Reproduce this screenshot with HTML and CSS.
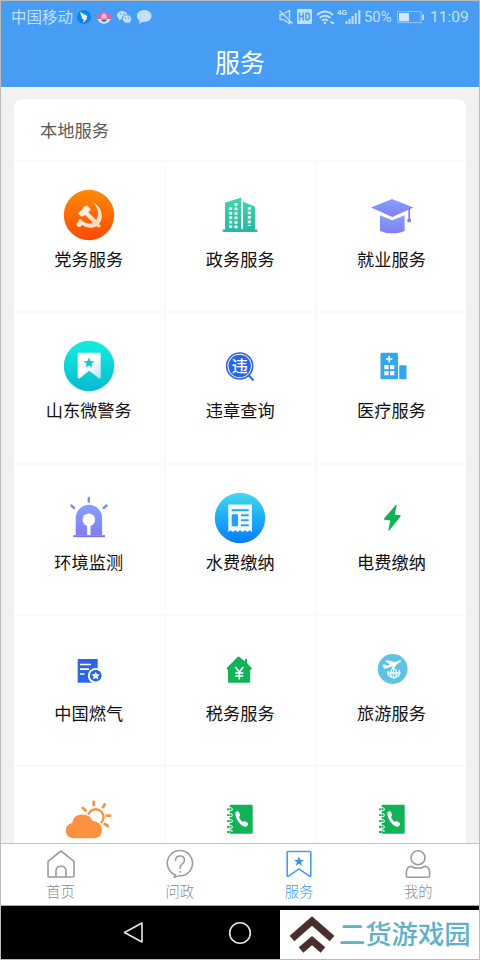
FILE: index.html
```html
<!DOCTYPE html>
<html lang="zh-CN">
<head>
<meta charset="utf-8">
<title>服务</title>
<link rel="stylesheet" href="styles.css">
</head>
<body>
<div class="phone">
  <header class="top">
    <div class="status">
      <div class="status-left">
        <span class="carrier">中国移动</span>
        <svg class="s-icon" viewBox="0 0 16 16"><circle cx="8" cy="8" r="7" fill="#0a84ee"/><path d="M4 3l7.500 4-1.200 2.200 1 .3-4.100 4.500.5-3.700-1.400-.3z" fill="#e8f6ff"/></svg>
        <svg class="s-icon" viewBox="0 0 16 16"><path d="M1.500 10Q0 6 1 4.500q2.500.5 3.500 3Q4.500 3.500 8 1.500q3.500 2 3.500 6 1-2.500 3.500-3 1 1.500-.5 5.500z" fill="#e0629f"/><path d="M5 9.500q0-4 3-5.500 3 1.500 3 5.500z" fill="#f4b5d6"/><path d="M1.500 10h13q-1 4-6.500 5-5.500-1-6.500-5z" fill="#d5dfe9"/><path d="M5 10.500h6l-1.500 2h-3z" fill="#605876"/></svg>
        <svg class="s-icon" viewBox="0 0 16 16"><path d="M6.300 2C3.300 2 1 3.900 1 6.300c0 1.400.8 2.600 2 3.400L2.600 11.500l2-1.100 1.200.2c-.5-3 2-5.200 5.500-5.200C10.700 3.400 8.700 2 6.300 2zM11.100 6.300c-2.500 0-4.400 1.600-4.400 3.700s1.900 3.700 4.400 3.700l1.400-.2 1.600.9-.4-1.500c1-.7 1.600-1.700 1.600-2.900 0-2.100-1.800-3.700-4.200-3.700z" fill="#c2e0fc"/><path d="M4.500 5h.1M8 5h.1M9.600 9h.1M12.600 9h.1" stroke="#469df3" stroke-width="1.300" stroke-linecap="round"/></svg>
        <svg class="s-icon" viewBox="0 0 16 16"><path d="M8.300 1C4.200 1 1 3.500 1 7c0 2.200 1 3.800 2.800 4.900L3 15l4-2.200c5 .4 8.600-2.200 8.600-5.800C15.600 3.500 12.400 1 8.300 1z" fill="#c2e0fc"/></svg>
      </div>
      <div class="status-right">
        <svg class="mute" viewBox="0 0 16 16" fill="none" stroke="#c2e0fc" stroke-width="1.400"><path d="M5 5.500H2v5h3l6.500 4V12M6.500 4.500l5-3v8M1.500 1.500l13 13"/></svg>
        <svg class="hd" viewBox="0 0 15 15"><rect width="15" height="15" rx="1" fill="#c2e0fc"/><path d="M2.500 3.500v8M6.300 3.500v8M2.500 7.500h3.800M9 4.200v6.600h1.500q2 0 2-3.300t-2-3.300z" fill="none" stroke="#469df3" stroke-width="1.500"/></svg>
        <svg class="wifi" viewBox="0 0 19 16" fill="none" stroke="#c2e0fc" stroke-width="1.900"><path d="M1 6q8-7 16 0M3.500 9q5.500-4.500 11 0M6 11.700q3-2.400 6 0"/><circle cx="9" cy="14" r="1.200" fill="#c2e0fc" stroke="none"/><path d="M14.500 12.500l1.500 1.500M17 13v2"/></svg>
        <svg class="signal" viewBox="0 0 25 17"><text x="0" y="7" class="net">4G</text><path d="M9.500 13v3M12.500 11v5M15.500 8v8M18.700 5v11M22.300 2v14" stroke="#c2e0fc" stroke-width="2"/></svg>
        <span class="percent">50%</span>
        <svg class="battery" viewBox="0 0 28 14"><rect x=".6" y="1.600" width="23.500" height="11" fill="none" stroke="#8fc5f8" stroke-width="1"/><rect x="2" y="3" width="10" height="8.300" fill="#d3e8fd"/><path d="M26 4.500v5.500" stroke="#b6dafb" stroke-width="2"/></svg>
        <span class="time">11:09</span>
      </div>
    </div>
    <h1 class="title">服务</h1>
  </header>

  <main class="content">
    <section class="card">
      <h2 class="card-title">本地服务</h2>
      <div class="grid">
        <div class="cell">
          <svg class="icon" viewBox="0 0 60 60"><defs><linearGradient id="party" x2="0" y2="1"><stop stop-color="#fd8b07"/><stop offset="1" stop-color="#fb4a05"/></linearGradient><linearGradient id="fade" x2="1" y2="1"><stop stop-color="#fff"/><stop offset="1" stop-color="#ffd5b5"/></linearGradient></defs><circle cx="30" cy="30" r="25.200" fill="url(#party)"/><path d="M34 17.500C40 20 44 27 42.500 34q-.8 3-2.500 5l2 2-2.500 1.800-2-1.600c-5 2.500-10.500 1.800-14.500-1.500-.5 2.200-3 3.200-4.600 1.600-1.500-1.700-.7-4 1.300-4.500-.4-1.500.4-2.600 1.700-2.800 4 4.500 9 5.500 13 3.500C41 33 40.500 24 34 17.500z" fill="url(#fade)"/><path d="M18.700 28.500l5.300-4.800.2-1.700 4-1.500 3.800 4-2.700 2.700 10.500 10.500-3 3-10.600-10.600-3.500 1.700z" fill="url(#fade)"/></svg>
          <span class="label">党务服务</span>
        </div>
        <div class="cell">
          <svg class="icon" viewBox="0 0 60 60"><defs><linearGradient id="gov" x2="0" y2="1"><stop stop-color="#3ed8b1"/><stop offset="1" stop-color="#27b7a1"/></linearGradient></defs><path d="M15 17.800l16.300-5.300V44h1.700V16.500l12 5.200V44.500h2.300V47H12.700v-2.500H15z" fill="url(#gov)"/><path d="M20.700 22.300v21M26 18v25.500M39.300 22v19" stroke="#fff" stroke-width="3" stroke-dasharray="2.800 1.700"/><path d="M32.200 17v27" stroke="#fff" stroke-width="1.700"/></svg>
          <span class="label">政务服务</span>
        </div>
        <div class="cell">
          <svg class="icon" viewBox="0 0 60 60"><defs><linearGradient id="violet" x2="0" y2="1"><stop stop-color="#82a3f8"/><stop offset="1" stop-color="#837cf5"/></linearGradient></defs><path d="M18 30.300l12.300 5 12.300-5V46q-12 5-24.600 0z" fill="url(#violet)"/><path d="M9 22.500L30 14l21.500 8.500L30.300 32z" fill="url(#violet)"/><path d="M47.200 23v13" stroke="#827ff5" stroke-width="1.800"/><circle cx="47.200" cy="35.500" r="2" fill="#827ff5"/></svg>
          <span class="label">就业服务</span>
        </div>

        <div class="cell">
          <svg class="icon" viewBox="0 0 60 60"><defs><linearGradient id="teal" x2="0" y2="1"><stop stop-color="#12efe0"/><stop offset="1" stop-color="#08b9cf"/></linearGradient><linearGradient id="mark" x1=".3" x2="1" y2="1"><stop offset=".4" stop-color="#fff"/><stop offset="1" stop-color="#abeaf0"/></linearGradient></defs><circle cx="30" cy="30" r="25.200" fill="url(#teal)"/><path d="M19.500 16.700h21.200q1 0 1 1v24q-.6 1.300-1.800.5L30.200 34.700l-9.500 7.500q-1.400.8-2-.5v-24q0-1 .8-1z" fill="url(#mark)"/><path d="M30 21.200l1.500 3.700 3.900.3-3 2.500 1 3.800-3.400-2.100-3.400 2.100 1-3.800-3-2.500 3.900-.3z" fill="#14c6cf"/></svg>
          <span class="label">山东微警务</span>
        </div>
        <div class="cell">
          <svg class="icon" viewBox="0 0 60 60"><circle cx="29.700" cy="30" r="13" fill="#fff" stroke="#3569db" stroke-width="1.700"/><circle cx="29.700" cy="30" r="11.200" fill="#2865e7"/><path d="M38.500 39l5 5.500" stroke="#3569db" stroke-width="2"/><text x="29.700" y="35.800" class="wei">违</text></svg>
          <span class="label">违章查询</span>
        </div>
        <div class="cell">
          <svg class="icon" viewBox="0 0 60 60" fill="#32a7ed"><rect x="18.500" y="16.700" width="17.500" height="26.500" rx="1.500"/><rect x="37.200" y="29.200" width="7.300" height="14" rx="1"/><path d="M27.200 19.800v6.400M24 23h6.400" stroke="#fff" stroke-width="1.700"/><path d="M22.300 29h4.300v4.300h-4.300zM28 29h4.300v4.300H28zM22.300 35h4.300v4.300h-4.300zM28 35h4.300v4.300H28z" fill="#fff"/></svg>
          <span class="label">医疗服务</span>
        </div>

        <div class="cell">
          <svg class="icon" viewBox="0 0 60 60"><path d="M16.700 47V30a13.200 13.200 0 0 1 26.400 0v17z" fill="url(#violet)"/><path d="M14.300 48.200H46" stroke="#7777dc" stroke-width="2"/><path d="M29.800 10v3.500M12.300 17.500l2.800 2.500M47.500 17.500L44.700 20" stroke="#7e8cf2" stroke-width="2.400" stroke-linecap="round"/><circle cx="29.800" cy="31.700" r="6.300" fill="#fff"/><path d="M29.800 34v13" stroke="#fff" stroke-width="3.400"/></svg>
          <span class="label">环境监测</span>
        </div>
        <div class="cell">
          <svg class="icon" viewBox="0 0 60 60"><defs><linearGradient id="water" x2="0" y2="1"><stop stop-color="#45d7ed"/><stop offset=".5" stop-color="#1eabf8"/><stop offset="1" stop-color="#087cf9"/></linearGradient></defs><circle cx="30" cy="30" r="25.200" fill="url(#water)"/><path d="M18.300 16.400H42V44L39.700 42.300 37.300 44 34.900 42.300 32.500 44 30.100 42.300 27.700 44 25.300 42.300 22.900 44 20.500 42.300 18.300 44z" fill="#f4fbff"/><path d="M21.700 22.300h17M31 27.300h7.700M31 32.300h7.700M31 37.300h7.700" stroke="#23a7f8" stroke-width="1.900"/><path d="M21.700 26.300h6.300v12h-6.300z" fill="#23a0f8"/></svg>
          <span class="label">水费缴纳</span>
        </div>
        <div class="cell">
          <svg class="icon" viewBox="0 0 60 60"><path d="M34 16.700L22 30.500l.3 1.200 6 .8-2 9.900 1 .2L38.700 28.300l-.4-1-5.500-.8 2-9.500z" fill="#11b258"/></svg>
          <span class="label">电费缴纳</span>
        </div>

        <div class="cell">
          <svg class="icon" viewBox="0 0 60 60"><path d="M18.700 20h20v23.700h-20z" fill="#2a65ea"/><path d="M21 25.500h11M21 30.200h9M21 35h4.500" stroke="#fff" stroke-width="1.700"/><circle cx="36.700" cy="36.700" r="7.800" fill="#fff"/><circle cx="36.700" cy="36.700" r="5.900" fill="#2a65ea"/><path d="M36.700 32.700l1.300 2.500 2.800.4-2 1.900.5 2.800-2.600-1.300-2.600 1.300.5-2.800-2-1.900 2.800-.4z" fill="#fff"/></svg>
          <span class="label">中国燃气</span>
        </div>
        <div class="cell">
          <svg class="icon" viewBox="0 0 60 60"><path d="M29 17.700l6 4.600V20h2v4l4.900 5.200q0 1.800-1.700 1.600v12q0 1-1 1H19q-1 0-1-1v-12q-2 0-1.200-1.800L27.500 18q.8-.6 1.500-.3z" fill="#11b258"/><path d="M25.300 28l4 5 4-5M29.300 33v7.500M25.300 34h8M25.300 37h8" fill="none" stroke="#fff" stroke-width="1.700"/></svg>
          <span class="label">税务服务</span>
        </div>
        <div class="cell">
          <svg class="icon" viewBox="0 0 60 60"><circle cx="30.700" cy="30" r="14.900" fill="#60c2e3"/><path d="M20.500 26l2-.5 2.600 1.300 3-1.300-5.300-3.500 2.600-1 7.500 2.200 4-1.700q3-.6 2 1l-4 2.700-3.700 5.400-2 .3 1.400-4-6.600 2.500-2 .1z" fill="#fff"/><g fill="none" stroke="#fff" stroke-width="1.300"><path d="M26 32a6 5.300 0 1 0 11-1M31.500 31v8M26 34h11.500"/><ellipse cx="31.700" cy="34.300" rx="3" ry="4.500"/></g></svg>
          <span class="label">旅游服务</span>
        </div>

        <div class="cell">
          <svg class="icon" viewBox="0 0 60 60"><circle cx="36.700" cy="27" r="7.800" fill="#fff" stroke="#fc9142" stroke-width="2.400"/><path d="M34.700 12v3M45.700 14.600l-1.700 2.500M47.800 25.700h3.200M45.700 34l3 2M23.700 18l3 2.500" stroke="#fc9142" stroke-width="2.800" stroke-linecap="round"/><path d="M14 48.300Q6.500 47 6.700 40.500 7 34.500 13 33q1.500-8.500 10-8.600 7.500 0 10.500 6.300 9 1 9.500 9Q43 47 36 48.300z" fill="#fc9142" stroke="#fff" stroke-width="3" paint-order="stroke"/></svg>
        </div>
        <div class="cell">
          <svg class="icon" viewBox="0 0 60 60"><use href="#book"/></svg>
        </div>
        <div class="cell">
          <svg class="icon" viewBox="0 0 60 60"><g id="book"><rect x="19.700" y="14.700" width="23" height="29" rx="1" fill="#11b258"/><path d="M17 19.300h2.500M17 25.200h2.500M17 31.100h2.500M17 37h2.500M17 42h2.500" stroke="#11b258" stroke-width="1.800"/><path d="M19 17.500q4.500 0 3 3h-3M19 23.400q4.500 0 3 3h-3M19 29.300q4.500 0 3 3h-3M19 35.200q4.500 0 3 3h-3M19 40q4.500 0 3 2" fill="none" stroke="#fff" stroke-width="1"/><path d="M25.500 22.300q1.800-2 3.500-.5l1 3.700q-1.200 1.200-.8 1.900 1.800 4 3.800 4.400l2-.8 3 2.200q.6 1.700-1.500 3.300-2.500 1-6-2.300-5.800-6-5-11.900z" fill="#fff"/></g></svg>
        </div>
      </div>
    </section>
  </main>

  <nav class="tabs">
    <div class="tab">
      <svg class="tab-icon" viewBox="0 0 30 30"><path d="M2 12.300L15 2l13 10.300V27q0 1-1 1H3q-1 0-1-1zM10 28v-6q0-4.800 5-4.800t5 4.800v6"/></svg>
      <span>首页</span>
    </div>
    <div class="tab">
      <svg class="tab-icon" viewBox="0 0 30 30"><path d="M10.500 26A12.600 12.600 0 1 1 15 26.800q-2.500 0-5 1.400-1.500.3.500-2.200M10.500 11.500Q10.500 7 15 7t4.500 4.300Q19.300 14 17 15.200 15 16.300 15 19.500M15 22.500v.6"/></svg>
      <span>问政</span>
    </div>
    <div class="tab active">
      <svg class="tab-icon" viewBox="0 0 30 30"><path d="M3.800 2.500h22.400q.6 0 .6.700v23.500q-.4 1.200-1.400.4L15 19.800 4.600 27.100q-1 .7-1.400-.4V3.200q0-.7.600-.7z"/><path class="star" d="M15 7.300l1.300 3.400 3.700.2-2.900 2.300 1 3.500-3.100-2-3.100 2 1-3.500-2.900-2.300 3.700-.2z"/></svg>
      <span>服务</span>
    </div>
    <div class="tab">
      <svg class="tab-icon" viewBox="0 0 30 30"><circle cx="15" cy="8.700" r="7"/><path d="M8 17.200q7 4.200 14 0 4.600.8 4.600 6v4q0 1-1 1H4.400q-1 0-1-1v-4q0-5.200 4.600-6z"/></svg>
      <span>我的</span>
    </div>
  </nav>

  <footer class="keys">
    <svg class="key back" viewBox="0 0 24 26"><path d="M21 3v19L3.500 12.500z"/></svg>
    <svg class="key home" viewBox="0 0 24 26"><circle cx="12" cy="13" r="10.300"/></svg>
  </footer>

  <div class="brand">
    <svg class="brand-mark" viewBox="0 0 44 38"><path d="M2 22.500L22 5l20 17.500M11 34l11-9.500L33 34" fill="none" stroke="#49302f" stroke-width="7"/></svg>
    <span>二货游戏园</span>
  </div>
</div>
</body>
</html>
```
FILE: styles.css
```css
* { box-sizing: border-box; }

body {
  margin: 0;
  font-family: "Noto Sans CJK SC", sans-serif;
}

.phone {
  position: relative;
  display: flex;
  flex-direction: column;
  width: 480px;
  height: 960px;
  overflow: hidden;
  background: #f2f2f2;
  border: 1px solid #b9bbbd;
}

.top {
  flex: none;
  height: 86px;
  background: #469df3;
  color: #fff;
}

.status {
  display: flex;
  justify-content: space-between;
  height: 31px;
  padding: 0 9px 0 10px;
  color: #c2e0fc;
}

.status-left,
.status-right {
  display: flex;
  align-items: center;
}

.carrier {
  margin-right: 3px;
  font-size: 15.5px;
  font-weight: 400;
  line-height: 29px;
}

.s-icon { width: 16px; height: 16px; margin-right: 4px; }
.mute { width: 16px; height: 16px; margin-right: 3px; }
.hd { width: 15px; height: 15px; margin-right: 4px; }
.wifi { width: 19px; height: 16px; margin-right: 2px; }
.signal { width: 25px; height: 17px; margin-right: 2px; }
.battery { width: 28px; height: 14px; margin: 0 5px 0 5px; }

.net {
  font: bold 8px Roboto, sans-serif;
  fill: #c2e0fc;
}

.percent,
.time {
  font-family: Roboto, sans-serif;
  font-size: 15.5px;
}

.percent { width: 28px; font-size: 14.8px; }
.time { width: 40px; }

.title {
  margin: 11px 0 0;
  font-size: 25px;
  font-weight: 400;
  line-height: 36px;
  text-align: center;
}

.content {
  flex: none;
  height: 756px;
  padding: 12px 13px 0;
  overflow: hidden;
}

.card {
  background: #fff;
  border-radius: 9px;
}

.card-title {
  height: 61px;
  margin: 0;
  padding-left: 26px;
  color: #595959;
  font-size: 17.3px;
  font-weight: 400;
  line-height: 62px;
}

.grid {
  display: grid;
  grid-template-columns: 151.5px 151.5px 149px;
  grid-auto-rows: 151.3px;
}

.cell {
  display: flex;
  flex-direction: column;
  align-items: center;
  padding-top: 23px;
  border-top: 2px solid #fafafa;
  border-right: 2px solid #fafafa;
}

.cell:nth-child(3n) { border-right: 0; }

.icon {
  flex: none;
  width: 60px;
  height: 60px;
}

.label {
  margin-top: 2px;
  color: #111;
  font-size: 17.2px;
  line-height: 24px;
}

.wei {
  font-size: 16px;
  font-weight: 500;
  text-anchor: middle;
  fill: #fff;
}

.tabs {
  display: flex;
  flex: none;
  height: 63px;
  padding-right: 1px;
  background: #fff;
  border-top: 1px solid #c4c4c4;
  border-bottom: 1px solid #aaa;
}

.tab {
  display: flex;
  flex: 1;
  flex-direction: column;
  align-items: center;
  padding-top: 5px;
  color: #8c8c8c;
  font-size: 14.3px;
  font-weight: 300;
  line-height: 22px;
}

.tab-icon {
  width: 30px;
  height: 30px;
  margin-bottom: 1px;
  fill: none;
  stroke: #9a9ba4;
  stroke-width: 1.6;
  stroke-linejoin: round;
  stroke-linecap: round;
}

.tab.active { color: #3e93ec; }
.active .tab-icon { stroke: #469df3; }
.tab-icon .star { fill: #3e91e8; stroke: none; }

.keys {
  display: flex;
  flex: 1;
  align-items: center;
  padding-left: 120px;
  background: #000;
}

.key {
  width: 24px;
  height: 26px;
  fill: none;
  stroke: #e6e6e6;
  stroke-width: 1.6;
  stroke-linejoin: round;
}

.home { margin-left: 83px; }

.brand {
  position: absolute;
  right: -1px;
  bottom: -1px;
  display: flex;
  align-items: center;
  width: 200px;
  height: 50px;
  padding-left: 10px;
  background: #fff;
  color: #5fb1ca;
  font-size: 26.3px;
  font-weight: 500;
  line-height: 44px;
  white-space: nowrap;
}

.brand span { height: 48px; }

.brand-mark {
  width: 44px;
  height: 38px;
  margin-right: 5px;
}
```
